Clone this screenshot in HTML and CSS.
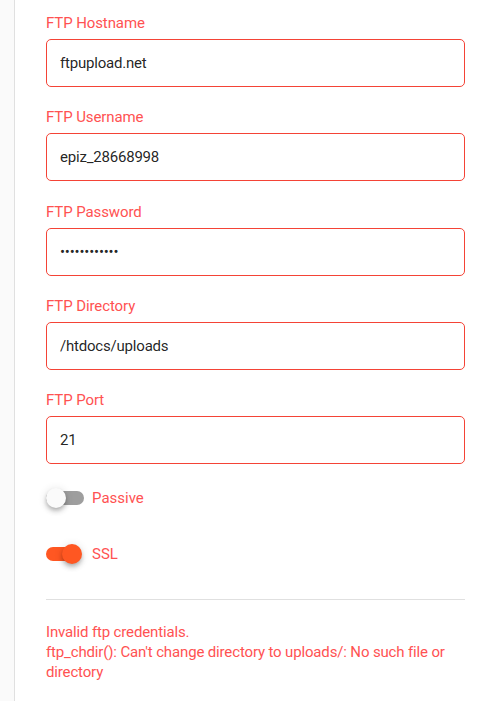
FILE: index.html
```html
<!DOCTYPE html>
<html>
<head>
<meta charset="utf-8">
<link rel="stylesheet" href="styles.css">
</head>
<body>
<div class="page">
  <div class="rail"></div>
  <div class="content">
    <div class="fields">
      <div class="field">
        <div class="label">FTP Hostname</div>
        <div class="input">ftpupload.net</div>
      </div>
      <div class="field">
        <div class="label">FTP Username</div>
        <div class="input">epiz_28668998</div>
      </div>
      <div class="field">
        <div class="label">FTP Password</div>
        <div class="input pw">&bull;&bull;&bull;&bull;&bull;&bull;&bull;&bull;&bull;&bull;&bull;&bull;</div>
      </div>
      <div class="field">
        <div class="label">FTP Directory</div>
        <div class="input">/htdocs/uploads</div>
      </div>
      <div class="field">
        <div class="label">FTP Port</div>
        <div class="input">21</div>
      </div>
    </div>
    <div class="toggles">
      <div class="toggle-row">
        <div class="switch"><div class="track"></div><div class="thumb"></div></div>
        <span class="tlabel">Passive</span>
      </div>
      <div class="toggle-row">
        <div class="switch on"><div class="track"></div><div class="thumb"></div></div>
        <span class="tlabel">SSL</span>
      </div>
    </div>
    <div class="divider"></div>
    <div class="error">Invalid ftp credentials.<br>ftp_chdir(): Can't change directory to uploads/: No such file or directory</div>
  </div>
</div>
</body>
</html>
```
FILE: styles.css
```css
html, body { margin: 0; padding: 0; background: #fff; }
body { font-family: Roboto, "Noto Sans", sans-serif; }
.page { display: flex; min-height: 701px; }
.rail { width: 14px; flex: none; background: #fafafa; border-right: 1px solid #e0e0e0; }
.content { flex: 1; padding: 13px 31px 0 31px; }
.fields { display: flex; flex-direction: column; gap: 20.3px; }
.label { font-size: 15px; line-height: 20px; color: #ff5252; margin-bottom: 6px; letter-spacing: -0.1px; }
.input {
  box-sizing: border-box; height: 48px; border: 1px solid #f44336; border-radius: 5px;
  padding: 0 13px; display: flex; align-items: center;
  font-size: 15px; letter-spacing: -0.2px; color: rgba(0,0,0,.87);
}
.input.pw { font-size: 15px; letter-spacing: -0.2px; }
.toggles { padding-top: 22px; display: flex; flex-direction: column; gap: 32px; }
.toggle-row { display: flex; align-items: center; height: 24px; gap: 8px; }
.switch { position: relative; width: 38px; height: 24px; }
.track { position: absolute; left: 0; right: 0; top: 5px; height: 14px; border-radius: 7px; background: #9e9e9e; }
.thumb { position: absolute; left: 0; top: 2px; width: 20px; height: 20px; border-radius: 50%; background: #fafafa;
  box-shadow: 0 2px 4px -1px rgba(0,0,0,.2), 0 4px 5px 0 rgba(0,0,0,.14), 0 1px 10px 0 rgba(0,0,0,.12); }
.switch.on .track { background: #ff5722; right: 3px; }
.switch.on .thumb { left: auto; right: 2px; background: #ff5722; }
.tlabel { font-size: 15px; color: #ff5252; }
.divider { margin-top: 33px; height: 1px; background: #e0e0e0; }
.error { margin-top: 22px; font-size: 15px; line-height: 20px; letter-spacing: -0.15px; color: #ff5252; }
```
